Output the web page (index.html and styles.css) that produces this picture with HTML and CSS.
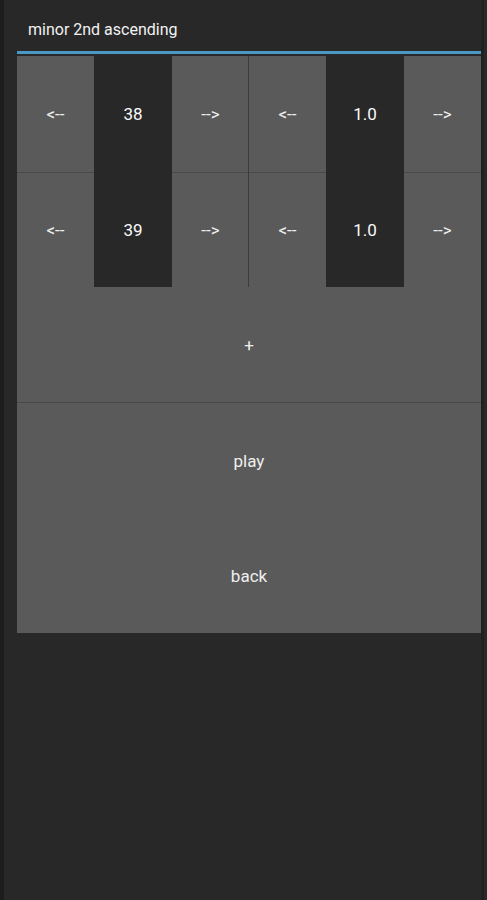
FILE: index.html
```html
<!DOCTYPE html>
<html>
<head>
<meta charset="utf-8">
<link rel="stylesheet" href="styles.css">
</head>
<body>
<div class="screen">
  <div class="edge"></div>
  <div class="main">
    <div class="title">minor 2nd ascending</div>
    <div class="underline"></div>
    <div class="panel">
      <div class="grid">
        <div class="half">
          <div class="cell btn">&lt;--</div>
          <div class="cell val">38</div>
          <div class="cell btn">--&gt;</div>
          <div class="cell btn">&lt;--</div>
          <div class="cell val">39</div>
          <div class="cell btn">--&gt;</div>
        </div>
        <div class="vsep"></div>
        <div class="half">
          <div class="cell btn">&lt;--</div>
          <div class="cell val">1.0</div>
          <div class="cell btn">--&gt;</div>
          <div class="cell btn">&lt;--</div>
          <div class="cell val">1.0</div>
          <div class="cell btn">--&gt;</div>
        </div>
      </div>
      <div class="wide plus">+</div>
      <div class="wide sep">play</div>
      <div class="wide">back</div>
    </div>
  </div>
  <div class="redge"></div>
</div>
</body>
</html>
```
FILE: styles.css
```css
html, body {
  margin: 0;
  padding: 0;
  background: #282828;
  height: 100%;
}
.screen {
  display: flex;
  height: 900px;
  font-family: Roboto, "Noto Sans", sans-serif;
  color: #efefef;
}
.edge {
  width: 4px;
  background: #1d1d1d;
}
.redge {
  width: 6px;
  background: linear-gradient(to right, #202020 0 3px, #282828 3px);
}
.main {
  flex: 1;
  padding-left: 13px;
  display: flex;
  flex-direction: column;
}
.title {
  font-size: 16px;
  height: 51px;
  line-height: 59px;
  padding-left: 11px;
  box-sizing: border-box;
  color: #f2f2f2;
}
.underline {
  height: 3px;
  background: #4a98c6;
  margin-bottom: 2px;
}
.panel {
  background: #5a5a5a;
  display: flex;
  flex-direction: column;
  width: 464px;
}
.grid {
  display: flex;
  height: 231px;
}
.half {
  flex: 1;
  display: grid;
  grid-template-columns: 77px 78px 77px;
  grid-template-rows: 116px 115px;
}
.vsep {
  width: 1px;
  background: #3c3c3c;
  margin-left: -1px;
}
.cell {
  display: flex;
  align-items: center;
  justify-content: center;
  font-size: 17px;
}
.btn:nth-child(4), .btn:nth-child(6) {
  border-top: 1px solid #4a4a4a;
}
.val {
  background: #282828;
  color: #fafafa;
}
.wide {
  height: 115px;
  display: flex;
  align-items: center;
  justify-content: center;
  font-size: 17px;
}
.plus {
  border-bottom: 1px solid #484848;
}
```
